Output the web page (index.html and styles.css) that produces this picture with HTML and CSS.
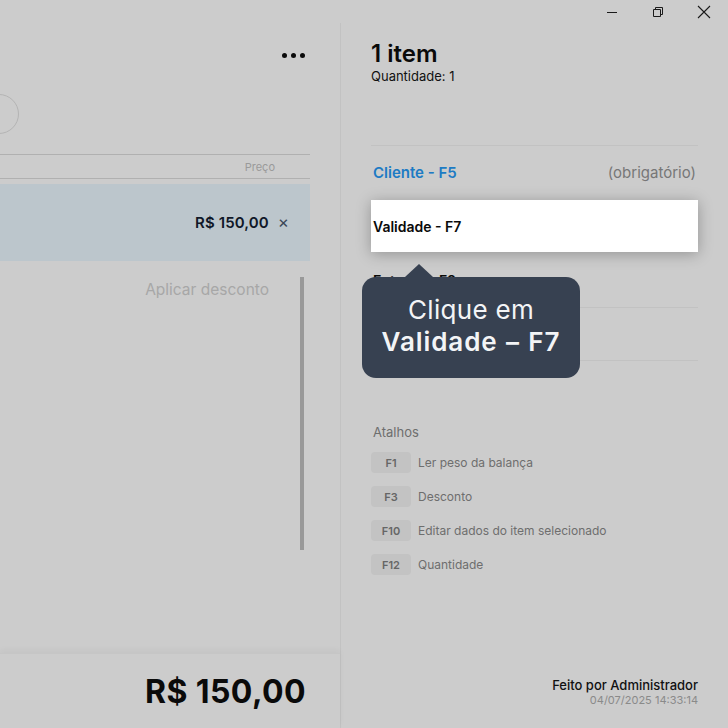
FILE: index.html
```html
<!DOCTYPE html>
<html lang="pt-BR">
<head>
<meta charset="utf-8">
<title>PDV</title>
<link rel="stylesheet" href="styles.css">
</head>
<body>
<div class="window">
  <div class="titlebar">
    <span class="wc wc-min"><svg width="12" height="12" viewBox="0 0 12 12"><path d="M1 6.5h10" stroke="#1a1a1a" stroke-width="1"/></svg></span>
    <span class="wc wc-max"><svg width="12" height="12" viewBox="0 0 12 12"><path d="M1.5 3.5h7v7h-7z M3.5 3.5v-2h7v7h-2" fill="none" stroke="#1a1a1a" stroke-width="1"/></svg></span>
    <span class="wc wc-close"><svg width="14" height="14" viewBox="0 0 14 14"><path d="M1 1l12 12M13 1L1 13" stroke="#1a1a1a" stroke-width="1.1"/></svg></span>
  </div>
  <div class="main">
    <section class="left">
      <div class="toolbar">
        <span class="dots"><i></i><i></i><i></i></span>
      </div>
      <div class="search-row"><span class="avatar"></span></div>
      <div class="table-head"><span class="th-price">Preço</span></div>
      <div class="item-row selected">
        <span class="item-price">R$ 150,00</span>
        <span class="item-remove">×</span>
      </div>
      <div class="scroll-area">
        <div class="discount"><span>Aplicar desconto</span></div>
        <div class="scrollbar"></div>
      </div>
      <div class="total-bar"><span class="total">R$ 150,00</span></div>
    </section>
    <section class="right">
      <h1 class="count">1 item</h1>
      <p class="qty">Quantidade: 1</p>
      <div class="fields">
        <div class="field first">
          <span class="field-link">Cliente - F5</span>
          <span class="field-note">(obrigatório)</span>
        </div>
        <div class="field highlight">
          <span class="field-label">Validade - F7</span>
        </div>
        <div class="field">
          <span class="field-label">Entrega - F8</span>
        </div>
        <div class="field boxed"></div>
        <div class="tooltip">
          <span class="tip-line">Clique em</span>
          <span class="tip-strong">Validade – F7</span>
        </div>
      </div>
      <div class="shortcuts">
        <h2 class="sc-title">Atalhos</h2>
        <ul class="sc-list">
          <li><kbd>F1</kbd><span>Ler peso da balança</span></li>
          <li><kbd>F3</kbd><span>Desconto</span></li>
          <li><kbd>F10</kbd><span>Editar dados do item selecionado</span></li>
          <li><kbd>F12</kbd><span>Quantidade</span></li>
        </ul>
      </div>
      <div class="made-by">
        <span class="mb-name">Feito por Administrador</span>
        <span class="mb-date">04/07/2025 14:33:14</span>
      </div>
    </section>
  </div>
</div>
</body>
</html>
```
FILE: styles.css
```css
* { box-sizing: border-box; margin: 0; padding: 0; }
html, body { width: 728px; height: 728px; overflow: hidden; }
body {
  background: #cccccc;
  font-family: Inter, "Noto Sans", sans-serif;
  color: #111;
}
.window { display: flex; flex-direction: column; height: 728px; }
.titlebar {
  height: 23px;
  display: flex;
  justify-content: flex-end;
  align-items: center;
  padding-right: 17px;
}
.wc { display: flex; width: 14px; height: 14px; align-items: center; justify-content: center; }
.wc-min { margin-right: 32px; }
.wc-max { margin-right: 32px; }
.main { flex: 1; display: grid; grid-template-columns: 340px 1fr; min-height: 0; }

/* LEFT */
.left { display: flex; flex-direction: column; padding-right: 30px; position: relative; }
.toolbar { height: 65px; display: flex; justify-content: flex-end; align-items: center; padding-right: 5px; }
.dots { display: flex; gap: 4px; }
.dots i { display: block; width: 5px; height: 5px; border-radius: 50%; background: #0a0a0a; }
.search-row { height: 40px; margin-top: 6px; position: relative; }
.avatar {
  display: block; width: 40px; height: 40px; border-radius: 50%;
  border: 1px solid #b4b4b4; margin-left: -21px;
}
.table-head {
  margin-top: 20px; height: 25px;
  border-top: 1px solid #b0b0b0; border-bottom: 1px solid #b0b0b0;
  display: flex; justify-content: flex-end; align-items: center;
  padding-right: 35px;
}
.th-price { font-size: 11px; color: #9a9a9a; }
.item-row {
  margin-top: 5px; height: 77px;
  display: flex; justify-content: flex-end; align-items: center;
  padding-right: 21px;
}
.item-row.selected { background: #bcc6cc; }
.item-price { font-size: 15px; font-weight: 600; color: #101828; letter-spacing: 0.1px; }
.item-remove { font-size: 17px; color: #3a4656; margin-left: 9px; line-height: 1; }
.scroll-area { flex: 1; display: flex; }
.discount { flex: 1; text-align: right; padding-right: 31px; padding-top: 18px; }
.discount span { font-size: 15.5px; color: #a7a7a7; }
.scrollbar { width: 4px; height: 273px; margin-top: 16px; margin-right: 6px; background: #999999; }
.total-bar {
  height: 75px; margin-right: -30px; padding-right: 34px;
  display: flex; justify-content: flex-end; align-items: center;
  box-shadow: 0 -3px 6px rgba(0,0,0,0.04);
  border-top: 1px solid #c6c6c6;
}
.total { font-size: 32px; font-weight: 700; color: #0a0a0a; letter-spacing: 0.4px; }

/* RIGHT */
.right {
  border-left: 1px solid #c2c2c2;
  padding: 17px 30px 21px 30px;
  display: flex; flex-direction: column;
}
.count { font-size: 24px; font-weight: 600; line-height: 28px; color: #0a0a0a; }
.qty { font-size: 13px; line-height: 16px; color: #111; }
.fields { margin-top: 61px; position: relative; }
.field {
  height: 54px; display: flex; align-items: center; justify-content: space-between;
  padding: 0 2px;
}
.field.first { border-top: 1px solid #c2c2c2; }
.field.boxed { border-top: 1px solid #c2c2c2; border-bottom: 1px solid #c2c2c2; }
.field-link { font-size: 15px; font-weight: 600; color: #1d7bc4; }
.field-note { font-size: 15px; color: #777; }
.field-label { font-size: 14px; font-weight: 600; color: #0a0a0a; }
.field.highlight {
  height: 52px; margin: 1px 0; background: #fff;
  box-shadow: 0 2px 14px rgba(0,0,0,0.28);
  position: relative; z-index: 2;
}
.tooltip {
  position: absolute; left: -9px; top: 132px; width: 218px; height: 101px;
  background: #374151; border-radius: 14px;
  display: flex; flex-direction: column; align-items: center; justify-content: center;
  color: #f3f4f6; z-index: 3;
}
.tooltip::before {
  content: ""; position: absolute; left: 43px; top: -13px;
  border-left: 14px solid transparent; border-right: 14px solid transparent;
  border-bottom: 13px solid #374151;
}
.tip-line { font-size: 26px; line-height: 32px; font-weight: 400; letter-spacing: 0.3px; margin-top: -3px; }
.tip-strong { font-size: 26px; line-height: 32px; font-weight: 600; letter-spacing: 0.9px; word-spacing: 1px; }
.shortcuts { margin-top: 62px; }
.sc-title { font-size: 13px; font-weight: 400; line-height: 18px; color: #6e6e6e; padding-left: 2px; }
.sc-list { list-style: none; margin-top: 11px; display: flex; flex-direction: column; gap: 13px; }
.sc-list li { display: flex; align-items: center; height: 21px; }
kbd {
  font-family: Inter, sans-serif; width: 40px; height: 21px; border-radius: 4px;
  background: #c3c3c3; color: #666; font-size: 11px; font-weight: 600;
  display: flex; align-items: center; justify-content: center;
}
.sc-list span { margin-left: 7px; font-size: 12px; color: #6e6e6e; }
.made-by { margin-top: auto; display: flex; flex-direction: column; align-items: flex-end; }
.mb-name { font-size: 13px; font-weight: 500; line-height: 16px; color: #111; }
.mb-date { font-size: 11px; line-height: 14px; color: #8a8a8a; }
```
